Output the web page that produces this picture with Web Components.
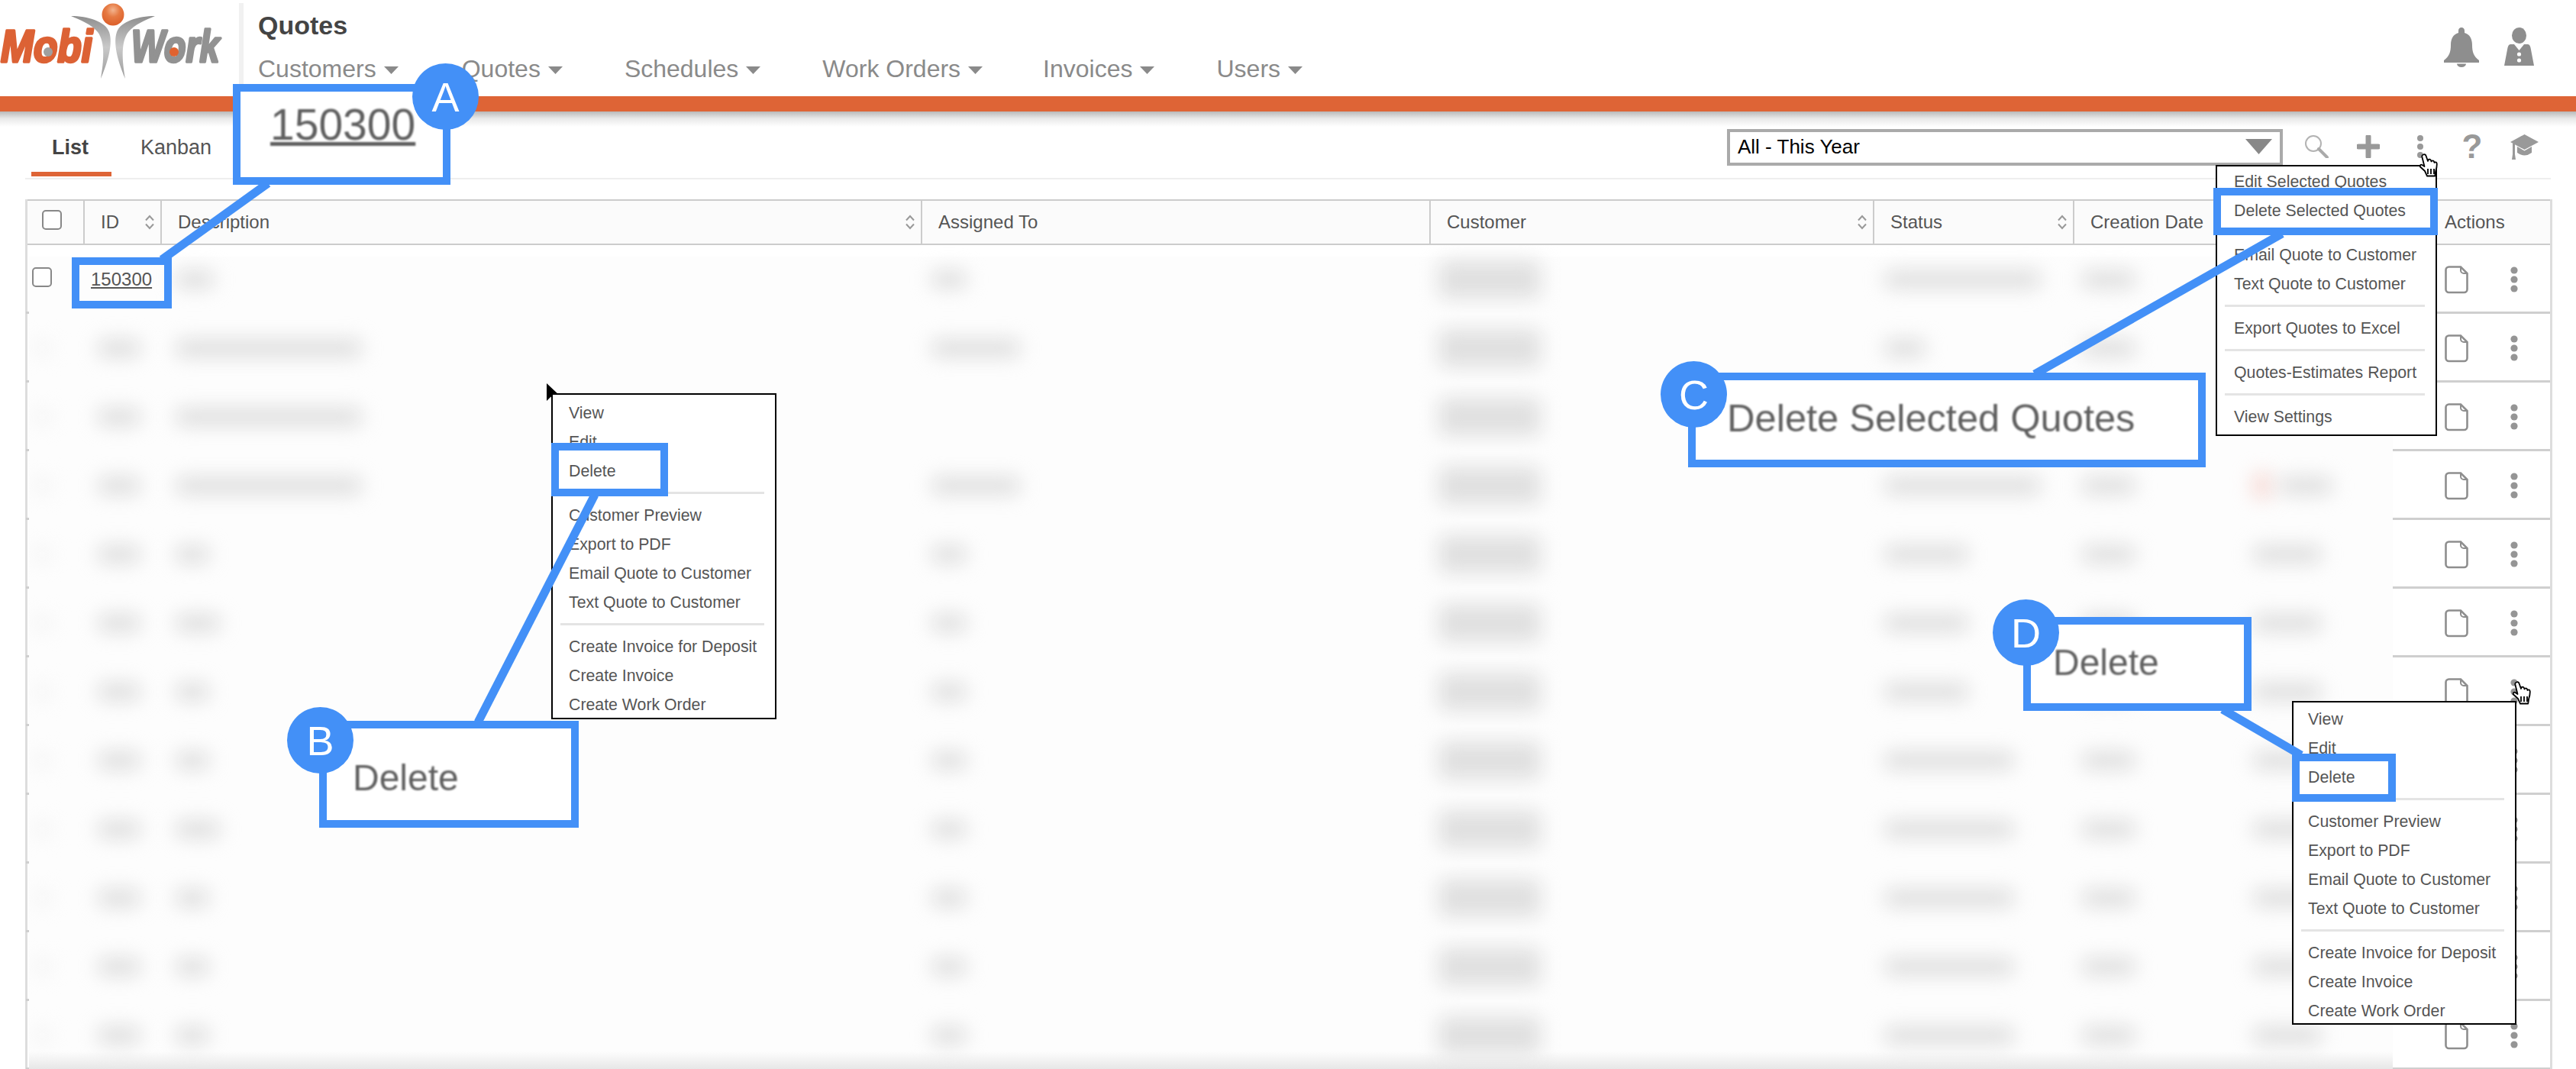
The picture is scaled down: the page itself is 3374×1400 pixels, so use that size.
<!DOCTYPE html>
<html lang="en">
<head>
<meta charset="utf-8">
<title>Quotes</title>
<style>
html,body{margin:0;padding:0;background:#fff;font-family:"Liberation Sans",Arial,sans-serif;}
</style>
</head>
<body>
<mw-app>
  <mw-header></mw-header>
  <mw-toolbar></mw-toolbar>
  <mw-table></mw-table>

  <cursor-arrow style="left:716px;top:502px"></cursor-arrow>
  <mw-menu items="View|Edit|Delete|-|Customer Preview|Export to PDF|Email Quote to Customer|Text Quote to Customer|-|Create Invoice for Deposit|Create Invoice|Create Work Order"
    style="left:722px;top:515px;width:295px;height:427px;--pt:5px;--pl:21px"></mw-menu>
  <mw-menu items="Edit Selected Quotes|Delete Selected Quotes|-|Email Quote to Customer|Text Quote to Customer|-|Export Quotes to Excel|-|Quotes-Estimates Report|-|View Settings"
    style="left:2902px;top:216px;width:290px;height:355px;--pt:1px;--pl:22px"></mw-menu>
  <mw-menu items="View|Edit|Delete|-|Customer Preview|Export to PDF|Email Quote to Customer|Text Quote to Customer|-|Create Invoice for Deposit|Create Invoice|Create Work Order"
    style="left:3002px;top:918px;width:294px;height:424px;--pt:3px;--pl:19px"></mw-menu>
  <cursor-hand style="left:3168px;top:201px"></cursor-hand>
  <cursor-hand style="left:3290px;top:892px"></cursor-hand>

  <call-lines></call-lines>
  <call-box style="left:94px;top:337px;width:131px;height:67px"></call-box>
  <call-box style="left:722px;top:580px;width:153px;height:70px"></call-box>
  <call-box style="left:2899px;top:246px;width:294px;height:62px"></call-box>
  <call-box style="left:3002px;top:987px;width:136px;height:63px"></call-box>

  <call-out letter="A" style="left:305px;top:110px;width:285px;height:132px;--bx:278px;--by:16px;--pl:39px;--pb:26px;--fs:57px;--td:underline">150300</call-out>
  <call-out letter="B" style="left:418px;top:944px;width:340px;height:140px;--bx:1px;--by:25px;--pl:34px;--pt:8px;--fs:48px">Delete</call-out>
  <call-out letter="C" style="left:2211px;top:488px;width:678px;height:124px;--bx:7px;--by:28px;--pl:41px;--pb:6px;--fs:50.6px">Delete Selected Quotes</call-out>
  <call-out letter="D" style="left:2650px;top:808px;width:299px;height:123px;--bx:3px;--by:20px;--pl:29px;--pb:4px;--fs:48px">Delete</call-out>
</mw-app>

<script>
const FONT = '"Liberation Sans",Arial,sans-serif';
function shadow(el, html){ el.attachShadow({mode:'open'}).innerHTML = html; }

class MwApp extends HTMLElement{
  constructor(){ super(); shadow(this,`<style>
    :host{display:block;position:relative;width:3374px;height:1400px;overflow:hidden;background:#fff;font-family:${FONT};}
  </style><slot></slot>`); }
}

class MwLogo extends HTMLElement{
  constructor(){ super(); shadow(this,`<style>:host{display:block;width:313px;height:110px;flex:none}svg{display:block;overflow:visible}
  text{font-family:${FONT};font-weight:700;font-style:italic;font-size:50px;stroke-linejoin:round;stroke-width:3px}</style>
  <svg width="296" height="110" viewBox="0 0 296 110">
    <defs>
      <radialGradient id="ball" cx=".5" cy=".3" r=".7"><stop offset="0" stop-color="#f3b48f"/><stop offset=".45" stop-color="#e67a43"/><stop offset="1" stop-color="#dc5f2a"/></radialGradient>
      <linearGradient id="arm" x1="0" y1="0" x2="0" y2="1"><stop offset="0" stop-color="#8f8f8f"/><stop offset=".5" stop-color="#c9c9c9"/><stop offset="1" stop-color="#9a9a9a"/></linearGradient>
    </defs>
    <path fill="url(#arm)" d="M93 21C115 21 138 28 143 42C148 56 142 80 132 103C136 80 138 55 128 42C120 32 105 26 93 21z"/>
    <path fill="url(#arm)" d="M203 21C181 21 158 28 153 42C148 56 154 80 164 103C160 80 158 55 168 42C176 32 191 26 203 21z"/>
    <circle cx="148" cy="19" r="14.500" fill="url(#ball)"/>
    <text transform="translate(1 81) scale(1.03 1.2)" fill="#dc6235" stroke="#dc6235">Mobi</text>
    <text transform="translate(172 81) scale(.93 1.2)" fill="#929292" stroke="#929292">Work</text>
    <circle cx="63" cy="68" r="6" fill="#a0a0a0"/>
    <circle cx="228" cy="68" r="6" fill="#e0622f"/>
  </svg>`); }
}

class MwNavItem extends HTMLElement{
  constructor(){ super(); shadow(this,`<style>
    :host{display:flex;align-items:center;gap:10px;font-size:32px;color:#8a8a8a;white-space:nowrap;height:48px}
    svg{display:block;margin-top:4px}
  </style><slot></slot><svg width="19" height="10" viewBox="0 0 19 10"><path d="M0 0H19L9.500 10z" fill="#8a8a8a"/></svg>`); }
}

class MwHeader extends HTMLElement{
  constructor(){ super(); shadow(this,`<style>
    :host{display:flex;height:126px;background:#fff;align-items:flex-start;}
    .logo{padding-top:0;flex:none}
    .div{width:6px;height:106px;margin-top:4px;background:#f1f1f1;flex:none}
    .main{padding-left:19px;flex:1}
    h1{margin:0;height:66px;line-height:66px;font-size:34px;font-weight:700;color:#444}
    nav{display:flex;gap:81px}
    nav mw-nav-item:nth-child(2){margin-left:2px}
    nav mw-nav-item:nth-child(5){margin-left:-2px}
    .right{display:flex;gap:33px;padding:36px 55px 0 0;flex:none}
    svg{display:block}
  </style>
  <div class="logo"><mw-logo></mw-logo></div>
  <div class="div"></div>
  <div class="main">
    <h1>Quotes</h1>
    <nav>
      <mw-nav-item>Customers</mw-nav-item>
      <mw-nav-item>Quotes</mw-nav-item>
      <mw-nav-item>Schedules</mw-nav-item>
      <mw-nav-item>Work Orders</mw-nav-item>
      <mw-nav-item>Invoices</mw-nav-item>
      <mw-nav-item>Users</mw-nav-item>
    </nav>
  </div>
  <div class="right">
    <svg width="46" height="52" viewBox="0 0 46 52"><path fill="#8e8e8e" d="M23 0c2.500 0 4 2 4 4v3c7 2 10 8 10 16 0 9 2 15 9 20v3H0v-3c7-5 9-11 9-20 0-8 3-14 10-16V4c0-2 1.500-4 4-4z"/><path fill="#8e8e8e" d="M17 47.500h12a6 4.500 0 0 1-12 0z"/></svg>
    <svg width="39" height="50" viewBox="0 0 39 50"><ellipse cx="19.500" cy="10.500" rx="9.500" ry="10.500" fill="#8e8e8e"/><path fill="#8e8e8e" d="M8 22h5l6.500 8 6.500-8h5q3 0 4 7l4 21H0l4-21q1-7 4-7z"/><circle cx="19.500" cy="35" r="2.600" fill="#fff"/><circle cx="19.500" cy="43" r="2.600" fill="#fff"/></svg>
  </div>`); }
}

class MwToolbar extends HTMLElement{
  constructor(){ super(); shadow(this,`<style>
    :host{display:block;}
    .orange{height:20px;background:#de6436}
    .shade{height:20px;background:linear-gradient(#b9b9b9,#e8e8e8 45%,#fff)}
    .tools{display:flex;margin:0 33px;height:67px;border-bottom:2px solid #eee;align-items:flex-start;padding-right:1px}
    .tab{height:59px;line-height:54px;font-size:27px;color:#555;padding:0 38px;white-space:nowrap}
    .tab.on{font-weight:700;color:#444;margin-left:8px;width:105px;box-sizing:border-box;padding:0 0 0 27px;border-bottom:6px solid #de6436;height:65px}
    .sel{margin:3px 10px 0 auto;width:728px;height:48px;box-sizing:border-box;border:4px solid #aaa;display:flex;align-items:center;justify-content:space-between;padding:0 10px 2px;font-size:26px;color:#000}
    .ic{width:68px;height:52px;display:flex;align-items:center;justify-content:center;flex:none}
    .q{font-size:44px;font-weight:700;color:#999;line-height:1}
    svg{display:block}
  </style>
  <div class="orange"></div><div class="shade"></div>
  <div class="tools">
    <div class="tab on">List</div><div class="tab">Kanban</div>
    <div class="sel"><span>All - This Year</span><svg width="35" height="20" viewBox="0 0 35 20"><path d="M0 0H35L17.500 20z" fill="#888"/></svg></div>
    <div class="ic"><svg width="32" height="30" viewBox="0 0 32 30"><circle cx="12" cy="11" r="10" fill="none" stroke="#b3b3b3" stroke-width="2"/><path d="M19 18L30 29" stroke="#aaa" stroke-width="4" stroke-linecap="round"/></svg></div>
    <div class="ic"><svg width="30" height="30" viewBox="0 0 30 30"><path d="M15 2V28M2 15H28" stroke="#999" stroke-width="7" stroke-linecap="round"/></svg></div>
    <div class="ic"><svg width="10" height="32" viewBox="0 0 10 32"><circle cx="5" cy="5" r="4" fill="#999"/><circle cx="5" cy="16" r="4" fill="#999"/><circle cx="5" cy="27" r="4" fill="#999"/></svg></div>
    <div class="ic q">?</div>
    <div class="ic"><svg width="37" height="33" viewBox="0 0 37 33"><path fill="#999" d="M18.500 0L37 10 18.500 20 0 10zM9 16l9.500 5.500L28 16v8q-9.500 7-19 0z"/><path fill="#999" d="M3 12h3v14l1 7H2l1-7z"/></svg></div>
  </div>`); }
}

const COLS='75px 101px 996px 666px 581px 262px 463px 160px';
const DATA_COLS='73px 101px 996px 666px 581px 262px 419px';
const ROWS=[
  {first:1,d:46,a:46,s:205,l:0},
  {d:240,a:116,s:54,l:0},
  {d:240,a:0,s:70,l:0},
  {d:240,a:116,s:205,l:100,red:1},
  {d:40,a:46,s:110,l:90},
  {d:54,a:46,s:110,l:90},
  {d:40,a:46,s:110,l:90},
  {d:40,a:46,s:170,l:90},
  {d:54,a:46,s:170,l:90},
  {d:40,a:46,s:170,l:90},
  {d:40,a:46,s:170,l:90},
  {d:40,a:46,s:170,l:90}
];
const sort=`<svg class="sort" width="16" height="20" viewBox="0 0 16 20"><path d="M3 7.500L8 2l5 5.500M3 12.500L8 18l5-5.500" fill="none" stroke="#999" stroke-width="2"/></svg>`;
const file=`<svg width="31" height="37" viewBox="0 0 31 37"><path d="M5.500 1.500H21L29.500 10V31a4 4 0 0 1-4 4H5.500a4 4 0 0 1-4-4V5.500a4 4 0 0 1 4-4z" fill="#fff" stroke="#8e8e8e" stroke-width="2.600"/><path d="M21 1.500V6a4 4 0 0 0 4 4h4.500" fill="none" stroke="#8e8e8e" stroke-width="2"/></svg>`;
const dots=`<svg class="k" width="10" height="34" viewBox="0 0 10 34"><circle cx="5" cy="5" r="4.600" fill="#959595"/><circle cx="5" cy="17" r="4.600" fill="#959595"/><circle cx="5" cy="29" r="4.600" fill="#959595"/></svg>`;
function blob(ml,w,h,cl){ return w?`<i class="b ${cl||''}" style="margin-left:${ml}px;width:${w}px;height:${h||22}px"></i>`:''; }

class MwTable extends HTMLElement{
  constructor(){ super();
    const head=[['',0],['ID',1],['Description',1],['Assigned To',0],['Customer',1],['Status',1],['Creation Date',0],['Actions',0]];
    const th=head.map((h,i)=> i==0
      ? `<div class="th c0"><span class="cb big"></span></div>`
      : `<div class="th c${i}"><span>${h[0]}</span>${h[1]?sort:''}</div>`).join('');
    const rows=ROWS.map((r,i)=>`<div class="row">
      <div class="data ${i==ROWS.length-1?'last':''}">
        <div class="td">${r.first?'<span class="cb"></span>':blob(6,22,22,'faint')}</div>
        <div class="td">${r.first?'<a>150300</a>':blob(17,56)}</div>
        <div class="td">${blob(18,r.d+4,22)}</div>
        <div class="td">${blob(12,r.a)}</div>
        <div class="td">${blob(10,134,50,'wide')}</div>
        <div class="td">${blob(13,r.s)}</div>
        <div class="td">${blob(10,70)}${r.red?blob(154,24,34,'red'):''}${blob(r.red?10:154,r.red?70:r.l)}</div>
      </div>
      <div class="act">${file}${dots}</div>
    </div>`).join('');
    shadow(this,`<style>
    :host{display:block;margin:26px 0 0 33px;width:3310px;box-sizing:border-box;border-left:3px solid #ddd;border-right:3px solid #ddd;font-family:${FONT}}
    .head{display:grid;grid-template-columns:${COLS};height:60px;box-sizing:border-box;border-top:2px solid #ccc;border-bottom:2px solid #ccc;background:#fbfbfb;font-size:24px;color:#555}
    .th{display:flex;align-items:center;justify-content:space-between;box-sizing:border-box;border-right:2px solid #ccc;padding:0 6px 0 21px;white-space:nowrap}
    .c6,.c7{border-right:0}
    .c0{padding-left:19px;justify-content:flex-start}
    .c7{padding-left:22px}
    .sort{display:block;flex:none}
    .cb{display:block;box-sizing:border-box;width:26px;height:26px;border:2px solid #888;border-radius:5px;background:#fff}
    .cb.big{margin-top:-6px}
    .data .cb{margin:-6px 0 0 4px}
    .row{display:grid;grid-template-columns:3098px 1fr;height:90px;padding-left:2px;margin-left:-2px;background:linear-gradient(#cfcfcf,#cfcfcf) bottom/100% 3px no-repeat}
    .data{display:grid;grid-template-columns:${DATA_COLS};background:#fdfdfd;height:90px;margin-left:2px;overflow:hidden}
    .row:first-of-type .data{background:linear-gradient(#fff 15px,#fdfdfd 15px)}
    .data.last{background:linear-gradient(#fdfdfd 66px,#e6e6e6)}
    .td{display:flex;align-items:center;min-width:0;font-size:24px;color:#555}
    a{padding-left:8px;text-decoration:underline;color:#555}
    .b{display:block;flex:none;background:#dcdcdc;filter:blur(13px);border-radius:8px}
    .b.wide{background:#e0e0e0}
    .b.faint{background:#f4f4f4}
    .b.red{background:#f6d8d3}
    .act{display:flex;align-items:center;padding-left:68px;box-sizing:border-box}
    .act svg{display:block;flex:none}
    .act .k{margin-left:55px}
    </style>
    <div class="head">${th}</div>
    <div class="body">${rows}</div>`);
  }
}

class MwMenu extends HTMLElement{
  constructor(){ super(); }
  connectedCallback(){
    if(this.shadowRoot) return;
    const items=(this.getAttribute('items')||'').split('|').map(t=> t==='-'?'<div class="sep"></div>':`<div class="it">${t}</div>`).join('');
    shadow(this,`<style>
    :host{position:absolute;box-sizing:border-box;border:2px solid #000;background:#fff;overflow:hidden;font-size:21.300px;color:#555;padding-top:var(--pt,2px);white-space:nowrap}
    .it{height:38px;line-height:38px;padding-left:var(--pl,20px)}
    .sep{height:20px;position:relative}
    .sep::after{content:"";position:absolute;left:10px;right:14px;top:8px;height:3px;background:#e4e4e4}
    </style>${items}`);
  }
}

class CallOut extends HTMLElement{
  constructor(){ super(); }
  connectedCallback(){
    if(this.shadowRoot) return;
    shadow(this,`<style>
    :host{position:absolute;box-sizing:border-box;border:10px solid #4390f7;background:#fff;display:flex;align-items:center;padding:var(--pt,0) 0 var(--pb,0) var(--pl,0);font-family:${FONT}}
    .t{font-size:var(--fs,48px);color:#5f5f5f;filter:blur(.8px);white-space:nowrap;text-decoration:var(--td,none)}
    .badge{position:absolute;left:calc(var(--bx) - 53px);top:calc(var(--by) - 53px);width:87px;height:87px;border-radius:50%;background:#4390f7;color:#fff;display:flex;align-items:center;justify-content:center;font-size:54px;line-height:1}
    </style><span class="t"><slot></slot></span><span class="badge">${this.getAttribute('letter')}</span>`);
  }
}

class CallBox extends HTMLElement{
  constructor(){ super(); shadow(this,`<style>:host{position:absolute;box-sizing:border-box;border:10px solid #4390f7}</style>`); }
}

class CallLines extends HTMLElement{
  constructor(){ super(); shadow(this,`<style>:host{position:absolute;left:0;top:0;width:3374px;height:1400px;pointer-events:none}svg{display:block}</style>
  <svg width="3374" height="1400" viewBox="0 0 3374 1400"><g stroke="#4390f7" stroke-width="11" fill="none">
    <path d="M351 240L212 340"/>
    <path d="M626 946L779 648"/>
    <path d="M2665 490L2989 306"/>
    <path d="M2911 929L3014 989"/>
  </g></svg>`); }
}

class CursorHand extends HTMLElement{
  constructor(){ super(); shadow(this,`<style>:host{position:absolute;width:28px;height:30px}svg{display:block}</style>
  <svg width="28" height="31" viewBox="0 0 28 31"><path fill="#fff" stroke="#000" stroke-width="1.800" stroke-linejoin="round" d="M6 1.500c1.500-.8 3 0 3.500 1.500l2.500 7 .5-1.500c.8-1.500 3-1 3.500.5l.5 1.500c.5-1.500 3-1.500 3.500 0l.5 1.500c.8-1 3-.8 3.200 1 .3 3-.5 7-1.500 10l-1 6.500H11l-3-6.500-6-5.500c-1-1.500.5-3.500 2.500-2.500l3 2L4.500 5c-.5-1.500 0-3 1.500-3.500z"/><path d="M12 20v7M16 20v7M20 20v7" stroke="#000" stroke-width="1.800"/></svg>`); }
}

class CursorArrow extends HTMLElement{
  constructor(){ super(); shadow(this,`<style>:host{position:absolute;width:18px;height:29px}svg{display:block}</style>
  <svg width="18" height="30" viewBox="0 0 18 30"><path fill="#000" d="M0 0V23L5.500 17.500 10.500 29.500 15 27.500 10 16H17z"/></svg>`); }
}

customElements.define('mw-app',MwApp);
customElements.define('mw-logo',MwLogo);
customElements.define('mw-nav-item',MwNavItem);
customElements.define('mw-header',MwHeader);
customElements.define('mw-toolbar',MwToolbar);
customElements.define('mw-table',MwTable);
customElements.define('mw-menu',MwMenu);
customElements.define('call-out',CallOut);
customElements.define('call-box',CallBox);
customElements.define('call-lines',CallLines);
customElements.define('cursor-hand',CursorHand);
customElements.define('cursor-arrow',CursorArrow);
</script>
</body>
</html>
